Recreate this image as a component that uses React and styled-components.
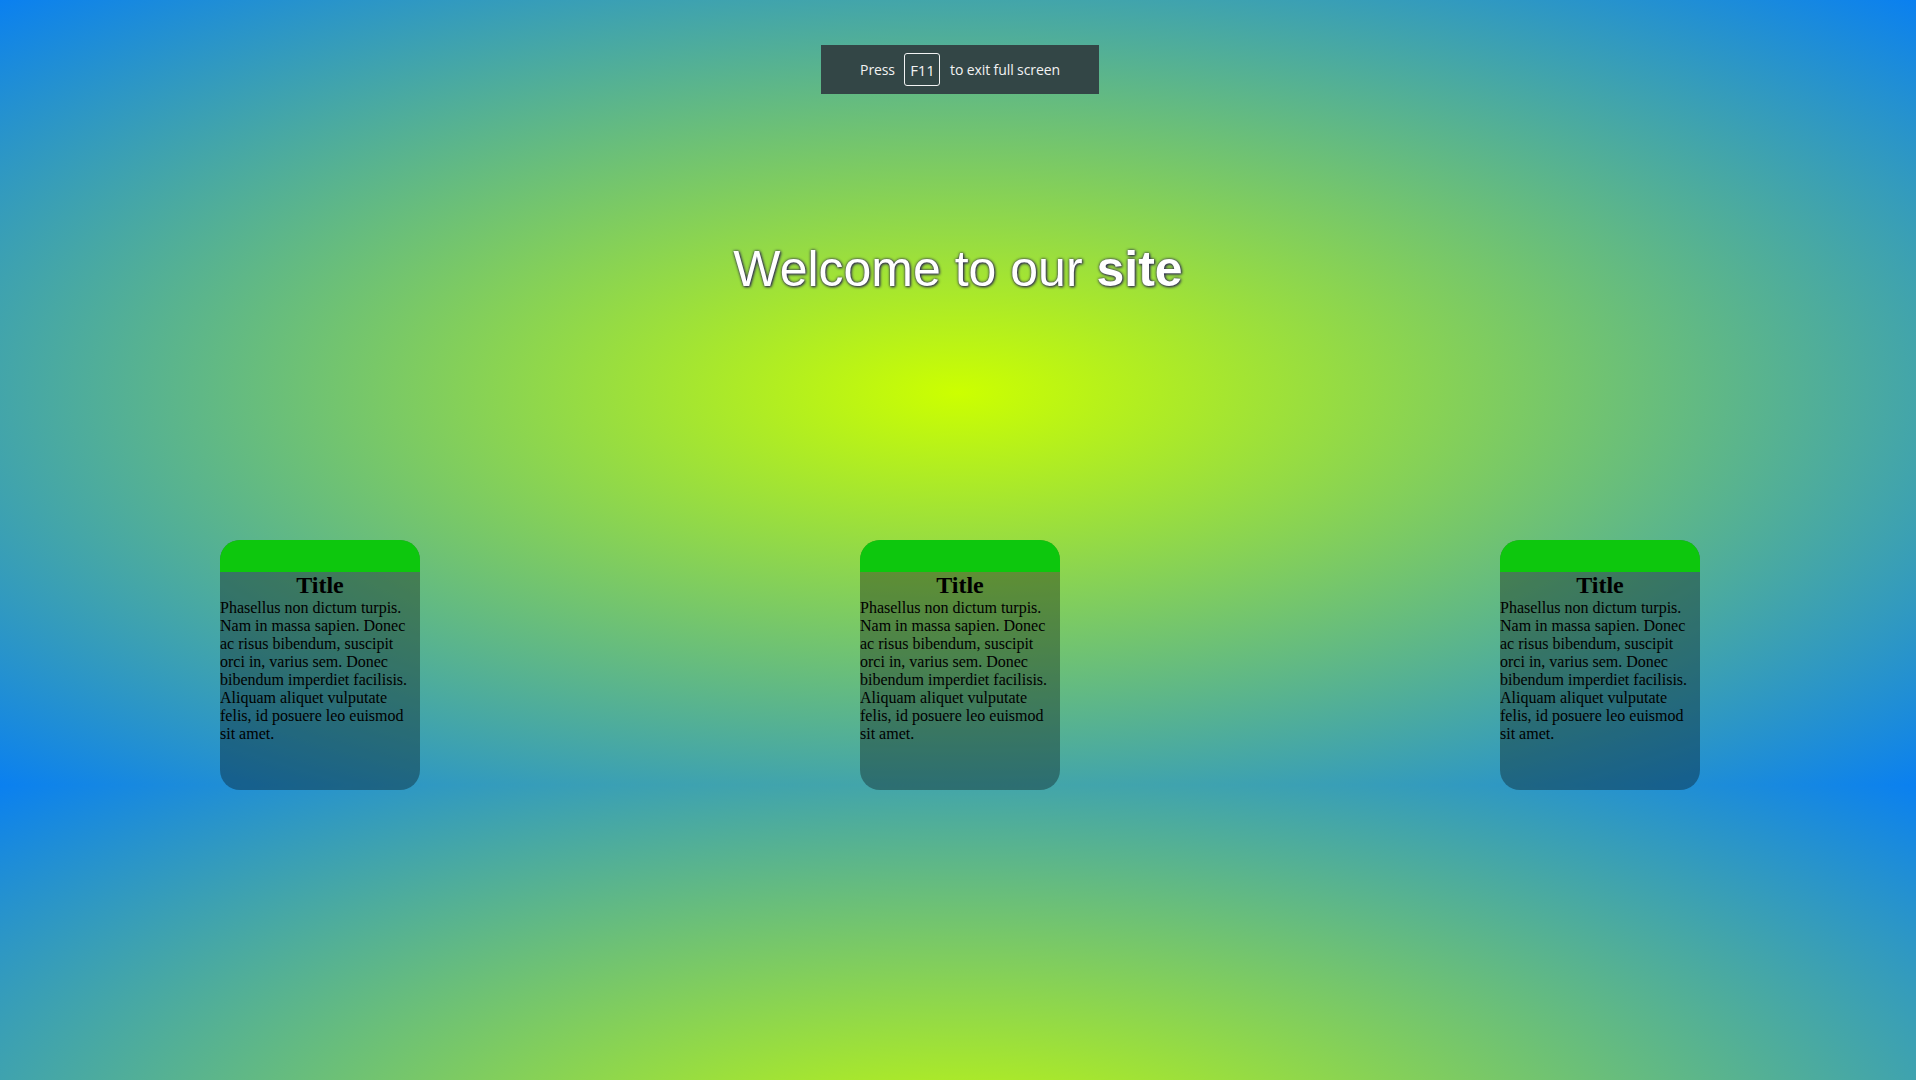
import React from "react"
import styled, { createGlobalStyle } from "styled-components"

const GlobalStyle = createGlobalStyle`
  html {
    min-height: 100%;
    background-color: #0a80f0;
    background-image: radial-gradient(ellipse farthest-corner at center, #ccff00 0%, #0a80f0 100%);
    background-size: 100% 785px;
    background-repeat: repeat;
  }
  body {
    margin: 0;
    font-family: "Liberation Serif", "Times New Roman", serif;
  }
`

const cards = [1, 2, 3]
const lorem =
  "Phasellus non dictum turpis. Nam in massa sapien. Donec ac risus bibendum, suscipit orci in, varius sem. Donec bibendum imperdiet facilisis. Aliquam aliquet vulputate felis, id posuere leo euismod sit amet."

export default function App() {
  return (
    <>
      <GlobalStyle />
      <Page>
        <FullscreenToast>
          Press <Key>F11</Key> to exit full screen
        </FullscreenToast>
        <Heading>
          Welcome to our <strong>site</strong>
        </Heading>
        <CardRow>
          {cards.map((n) => (
            <Card key={n}>
              <CardTop />
              <CardTitle>Title</CardTitle>
              <CardText>{lorem}</CardText>
            </Card>
          ))}
        </CardRow>
      </Page>
    </>
  )
}

const Page = styled.div`
  position: relative;
  padding-top: 241px;
  min-height: 100vh;
  box-sizing: border-box;
`

const FullscreenToast = styled.div`
  position: absolute;
  top: 45px;
  left: 821px;
  width: 278px;
  height: 49px;
  box-sizing: border-box;
  background: #334646;
  color: #f2f2f2;
  font-family: "Open Sans", "Noto Sans", sans-serif;
  font-size: 14px;
  letter-spacing: -0.1px;
  display: flex;
  align-items: center;
  justify-content: center;
  gap: 6px;
  white-space: pre;
`

const Key = styled.span`
  display: inline-flex;
  align-items: center;
  justify-content: center;
  width: 36px;
  height: 33px;
  box-sizing: border-box;
  border: 1px solid #f2f2f2;
  border-radius: 3px;
  font-size: 15px;
`

const Heading = styled.h1`
  margin: 0;
  text-align: center;
  font-family: "Liberation Sans", Arial, sans-serif;
  font-size: 50px;
  font-weight: normal;
  line-height: 57px;
  color: #ffffff;
  text-shadow: 0 0 3px #2a2450, 1px 1px 3px #2a2450;

  strong {
    font-weight: bold;
  }
`

const CardRow = styled.div`
  display: flex;
  gap: 440px;
  padding-left: 220px;
  margin-top: 242px;
`

const Card = styled.div`
  width: 200px;
  height: 250px;
  flex: none;
  border-radius: 20px;
  overflow: hidden;
  background: rgba(0, 0, 0, 0.33);
`

const CardTop = styled.div`
  height: 32px;
  background: #0dc70d;
`

const CardTitle = styled.h2`
  margin: 0;
  text-align: center;
  font-size: 24px;
  font-weight: bold;
  line-height: 27px;
  color: #000;
`

const CardText = styled.p`
  margin: 0;
  font-size: 16px;
  line-height: 18px;
  color: #000;
`
